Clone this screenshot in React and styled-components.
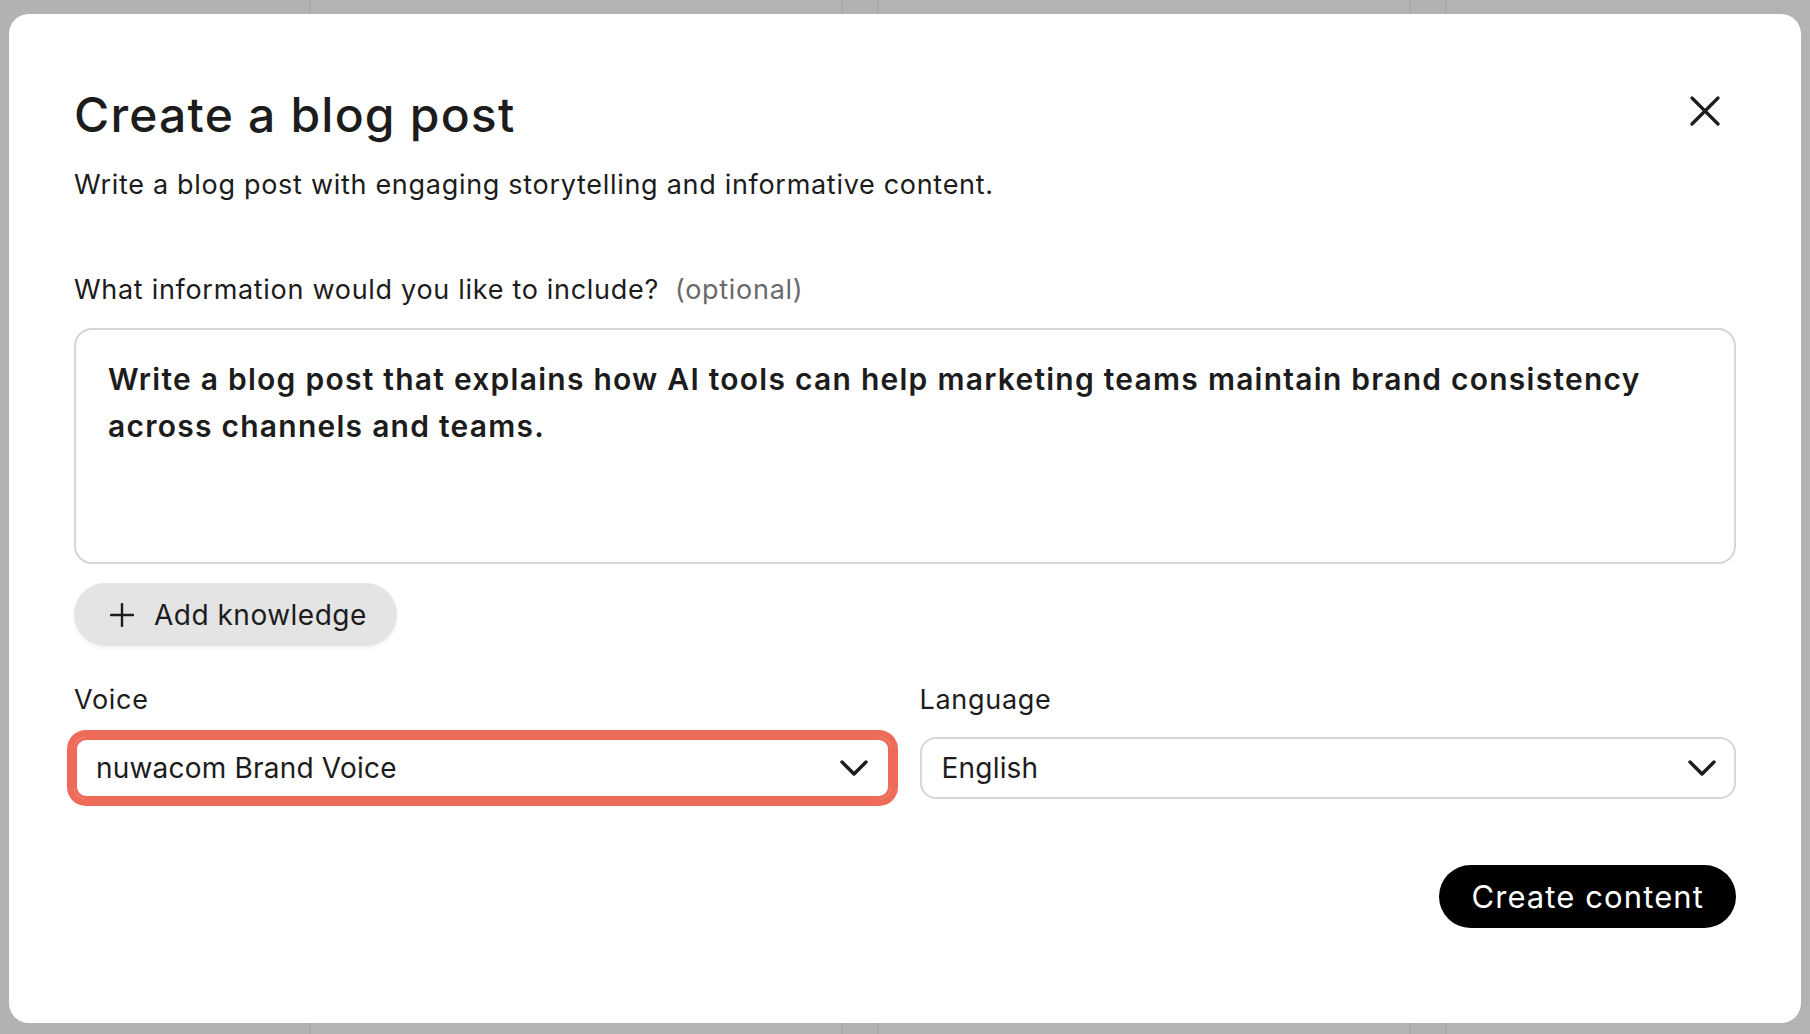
import React from 'react';
import styled, { createGlobalStyle } from 'styled-components';

const GlobalStyle = createGlobalStyle`
  * {
    box-sizing: border-box;
  }
  html,
  body {
    margin: 0;
    padding: 0;
    height: 100%;
  }
  body {
    font-family: 'Inter', 'Noto Sans', sans-serif;
    color: #1c1c1c;
    background: #b2b2b2;
    overflow: hidden;
  }
`;

const Page = styled.div`
  width: 1810px;
  height: 1034px;
  position: relative;
  background: #b2b2b2;
  overflow: hidden;
`;

const BackGrid = styled.div`
  display: grid;
  grid-template-columns: 534px 534px 534px;
  gap: 34px;
  padding: 0 0 0 309px;
`;

const BackCard = styled.div`
  height: 1034px;
  border-left: 2px solid #a9a9a9;
  border-right: 2px solid #a9a9a9;
  background: #b3b3b3;
`;

const Overlay = styled.div`
  position: absolute;
  inset: 0;
  padding: 14px 9px 11px 9px;
  display: flex;
`;

const Modal = styled.div`
  flex: 1;
  background: #ffffff;
  border-radius: 20px;
  padding: 72px 65px 0 65px;
  display: flex;
  flex-direction: column;
`;

const Header = styled.div`
  display: flex;
  justify-content: space-between;
  align-items: flex-start;
`;

const Title = styled.h1`
  margin: 0;
  font-size: 48px;
  line-height: 58px;
  font-weight: 500;
  letter-spacing: 1.2px;
  color: #1c1c1c;
`;

const CloseButton = styled.button`
  border: 0;
  background: transparent;
  padding: 0;
  margin: 10px 16px 0 0;
  width: 30px;
  height: 30px;
  display: flex;
  cursor: pointer;
`;

const Subtitle = styled.p`
  margin: 26px 0 0;
  font-size: 27px;
  line-height: 30px;
  letter-spacing: 0.7px;
  color: #1c1c1c;
`;

const FieldLabel = styled.label`
  display: block;
  margin-top: ${(p) => p.$top || 0}px;
  font-size: 27px;
  line-height: 30px;
  letter-spacing: 0.7px;
  color: #1c1c1c;
`;

const Optional = styled.span`
  margin-left: 16px;
  color: #6a6a6a;
`;

const TextArea = styled.div`
  margin-top: 23px;
  height: 236px;
  border: 2px solid #d6d6d6;
  border-radius: 18px;
  padding: 26px 32px;
  font-size: 30px;
  line-height: 47px;
  letter-spacing: 1.25px;
  font-weight: 600;
  color: #1c1c1c;
`;

const PillButton = styled.button`
  align-self: flex-start;
  margin-top: 19px;
  height: 63px;
  border: 0;
  border-radius: 32px;
  padding: 0 30px 0 36px;
  display: flex;
  align-items: center;
  gap: 20px;
  background: #e4e4e4;
  color: #1c1c1c;
  font-family: 'Inter', sans-serif;
  font-size: 28px;
  letter-spacing: 0.5px;
  font-weight: 400;
  box-shadow: 0 2px 4px rgba(0, 0, 0, 0.06);
  cursor: pointer;
`;

const PrimaryButton = styled.button`
  height: 63px;
  border: 0;
  border-radius: 32px;
  padding: 0 32px;
  background: #000000;
  color: #ffffff;
  font-family: 'Inter', sans-serif;
  font-size: 31px;
  letter-spacing: 1.1px;
  font-weight: 400;
  cursor: pointer;
`;

const SelectRow = styled.div`
  display: grid;
  grid-template-columns: 1fr 1fr;
  gap: 29px;
  margin-top: 39px;
`;

const Field = styled.div`
  display: flex;
  flex-direction: column;
`;

const Select = styled.div`
  margin-top: 22px;
  height: 62px;
  border: ${(p) => (p.$focused ? '3px solid #ee6b5a' : '2px solid #d6d6d6')};
  box-shadow: ${(p) => (p.$focused ? '0 0 0 7px #ee6b5a' : 'none')};
  border-radius: ${(p) => (p.$focused ? 12 : 16)}px;
  padding: 0 ${(p) => (p.$focused ? 20 : 18)}px 0 ${(p) => (p.$focused ? 19 : 20)}px;
  display: flex;
  align-items: center;
  justify-content: space-between;
  font-size: 28px;
  letter-spacing: 0.2px;
  color: #1c1c1c;
`;

const Footer = styled.div`
  display: flex;
  justify-content: flex-end;
  margin-top: 66px;
`;

const CloseIcon = () => (
  <svg width="30" height="30" viewBox="0 0 30 30" fill="none">
    <path d="M2 2 L28 28 M28 2 L2 28" stroke="#1c1c1c" strokeWidth="3.2" strokeLinecap="round" />
  </svg>
);

const Chevron = () => (
  <svg width="28" height="18" viewBox="0 0 28 18" fill="none">
    <path d="M2 3 L14 15 L26 3" stroke="#1c1c1c" strokeWidth="3.4" strokeLinecap="round" strokeLinejoin="round" />
  </svg>
);

const PlusIcon = () => (
  <svg width="24" height="24" viewBox="0 0 24 24" fill="none">
    <path d="M12 1 V23 M1 12 H23" stroke="#1c1c1c" strokeWidth="2.4" strokeLinecap="round" />
  </svg>
);

const App = () => {
  return (
    <Page>
      <GlobalStyle />
      <BackGrid>
        <BackCard />
        <BackCard />
        <BackCard />
      </BackGrid>
      <Overlay>
        <Modal>
          <Header>
            <Title>Create a blog post</Title>
            <CloseButton aria-label="Close">
              <CloseIcon />
            </CloseButton>
          </Header>
          <Subtitle>Write a blog post with engaging storytelling and informative content.</Subtitle>
          <FieldLabel $top={75}>
            What information would you like to include?
            <Optional>(optional)</Optional>
          </FieldLabel>
          <TextArea>
            Write a blog post that explains how AI tools can help marketing teams maintain brand consistency
            across channels and teams.
          </TextArea>
          <PillButton>
            <PlusIcon />
            Add knowledge
          </PillButton>
          <SelectRow>
            <Field>
              <FieldLabel>Voice</FieldLabel>
              <Select $focused>
                nuwacom Brand Voice
                <Chevron />
              </Select>
            </Field>
            <Field>
              <FieldLabel>Language</FieldLabel>
              <Select>
                English
                <Chevron />
              </Select>
            </Field>
          </SelectRow>
          <Footer>
            <PrimaryButton>Create content</PrimaryButton>
          </Footer>
        </Modal>
      </Overlay>
    </Page>
  );
};

export default App;
